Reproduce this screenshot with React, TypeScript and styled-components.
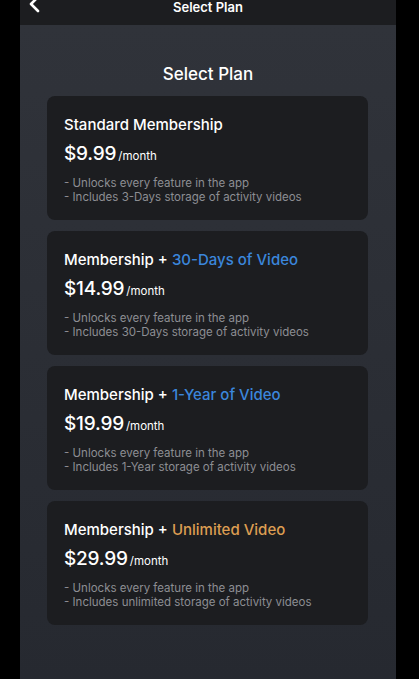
import styled, { createGlobalStyle } from 'styled-components'

const GlobalStyle = createGlobalStyle`
  html, body {
    margin: 0;
    padding: 0;
    background: #000;
    font-family: 'Inter', 'Noto Sans', sans-serif;
    -webkit-font-smoothing: antialiased;
  }
`

type Plan = {
  lead: string
  accent?: string
  accentColor?: string
  price: string
  storage: string
}

const plans: Plan[] = [
  { lead: 'Standard Membership', price: '$9.99', storage: '3-Days' },
  {
    lead: 'Membership + ',
    accent: '30-Days of Video',
    accentColor: '#3b86db',
    price: '$14.99',
    storage: '30-Days',
  },
  {
    lead: 'Membership + ',
    accent: '1-Year of Video',
    accentColor: '#3b86db',
    price: '$19.99',
    storage: '1-Year',
  },
  {
    lead: 'Membership + ',
    accent: 'Unlimited Video',
    accentColor: '#dc9d52',
    price: '$29.99',
    storage: 'unlimited',
  },
]

const App = () => {
  return (
    <>
      <GlobalStyle />
      <Screen>
        <Phone>
          <Header>
            <BackButton aria-label="Back">
              <svg width="14" height="18" viewBox="0 0 14 18" fill="none">
                <path
                  d="M10 1 L3 8 L10 15"
                  stroke="#fff"
                  strokeWidth="2.6"
                  strokeLinecap="round"
                  strokeLinejoin="round"
                />
              </svg>
            </BackButton>
            <HeaderTitle>Select Plan</HeaderTitle>
          </Header>
          <Body>
            <PageTitle>Select Plan</PageTitle>
            <CardList>
              {plans.map((plan) => (
                <Card key={plan.price}>
                  <CardTitle>
                    {plan.lead}
                    {plan.accent && (
                      <Accent color={plan.accentColor}>{plan.accent}</Accent>
                    )}
                  </CardTitle>
                  <PriceRow>
                    <Price>{plan.price}</Price>
                    <Period>/month</Period>
                  </PriceRow>
                  <Features>
                    <li>- Unlocks every feature in the app</li>
                    <li>- Includes {plan.storage} storage of activity videos</li>
                  </Features>
                </Card>
              ))}
            </CardList>
          </Body>
        </Phone>
      </Screen>
    </>
  )
}

const Screen = styled.div`
  width: 419px;
  height: 679px;
  background: #000;
  overflow: hidden;
`

const Phone = styled.div`
  margin-left: 20px;
  width: 376px;
  height: 679px;
  display: flex;
  flex-direction: column;
`

const Header = styled.div`
  position: relative;
  height: 25px;
  flex-shrink: 0;
  background: #1c1d20;
  display: flex;
  align-items: flex-start;
  justify-content: center;
`

const BackButton = styled.button`
  position: absolute;
  left: 8px;
  top: -4px;
  padding: 0;
  border: none;
  background: none;
  display: flex;
`

const HeaderTitle = styled.div`
  margin-top: -1px;
  color: #fff;
  font-size: 13px;
  font-weight: 600;
  line-height: 16px;
`

const Body = styled.div`
  flex: 1;
  background: linear-gradient(180deg, #30333a 0%, #2a2d34 60%, #262930 100%);
  display: flex;
  flex-direction: column;
  padding-top: 38px;
`

const PageTitle = styled.h1`
  margin: 0 0 11px;
  text-align: center;
  color: #fff;
  font-size: 17px;
  font-weight: 500;
  line-height: 22px;
`

const CardList = styled.div`
  display: flex;
  flex-direction: column;
  gap: 11px;
  margin-left: 27px;
  width: 321px;
`

const Card = styled.div`
  height: 124px;
  box-sizing: border-box;
  background: #1c1d20;
  border-radius: 8px;
  padding: 19px 17px 0;
`

const CardTitle = styled.div`
  color: #fff;
  font-size: 15px;
  font-weight: 500;
  line-height: 20px;
`

const Accent = styled.span<{ color?: string }>`
  color: ${(props) => props.color};
`

const PriceRow = styled.div`
  display: flex;
  align-items: baseline;
  gap: 2px;
  margin-top: 7px;
`

const Price = styled.span`
  color: #fff;
  font-size: 19px;
  font-weight: 500;
  line-height: 23px;
  letter-spacing: -0.2px;
`

const Period = styled.span`
  color: #fff;
  font-size: 11.5px;
  line-height: 14px;
`

const Features = styled.ul`
  list-style: none;
  margin: 12px 0 0;
  padding: 0;
  color: #8d8e93;
  font-size: 11.5px;
  line-height: 13.5px;
`

export default App
